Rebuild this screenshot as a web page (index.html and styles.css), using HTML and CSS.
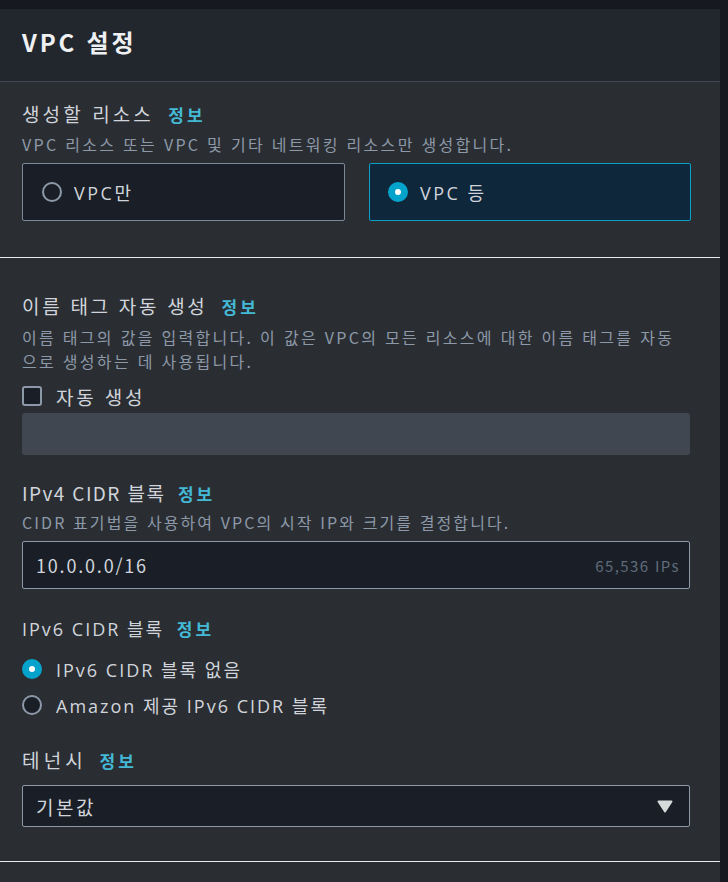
FILE: index.html
```html
<!DOCTYPE html>
<html lang="ko">
<head>
<meta charset="utf-8">
<link rel="stylesheet" href="styles.css">
</head>
<body>
<div class="panel">
  <div class="header"><h2 class="title">VPC 설정</h2></div>

  <div class="section s1">
    <div class="label">생성할 리소스 <a class="info">정보</a></div>
    <div class="desc">VPC 리소스 또는 VPC 및 기타 네트워킹 리소스만 생성합니다.</div>
    <div class="tiles">
      <div class="tile">
        <span class="radio"></span><span class="tile-text">VPC만</span>
      </div>
      <div class="tile tile-on">
        <span class="radio radio-on"></span><span class="tile-text">VPC 등</span>
      </div>
    </div>
  </div>

  <div class="section s2">
    <div class="label label-long">이름 태그 자동 생성 <a class="info">정보</a></div>
    <div class="desc desc-2">이름 태그의 값을 입력합니다. 이 값은 VPC의 모든 리소스에 대한 이름 태그를 자동<br>으로 생성하는 데 사용됩니다.</div>
    <div class="check-row"><span class="checkbox"></span><span class="check-text">자동 생성</span></div>
    <div class="disabled-input"></div>

    <div class="label label-latin mt-field">IPv4 CIDR 블록 <a class="info">정보</a></div>
    <div class="desc desc-3">CIDR 표기법을 사용하여 VPC의 시작 IP와 크기를 결정합니다.</div>
    <div class="input">
      <span class="input-value">10.0.0.0/16</span>
      <span class="input-hint">65,536 IPs</span>
    </div>

    <div class="label mt-field6 wide">IPv6 CIDR 블록 <a class="info">정보</a></div>
    <div class="radio-list">
      <div class="radio-row"><span class="radio radio-on"></span><span class="radio-text">IPv6 CIDR 블록 없음</span></div>
      <div class="radio-row"><span class="radio"></span><span class="radio-text">Amazon 제공 IPv6 CIDR 블록</span></div>
    </div>

    <div class="label label-short mt-tenancy">테넌시 <a class="info">정보</a></div>
    <div class="select">
      <span class="select-value">기본값</span>
      <svg class="caret" width="16" height="13" viewBox="0 0 16 13"><path d="M1.5 1.5 H14.5 L8 11.5 Z" fill="#d5dbdb" stroke="#d5dbdb" stroke-width="2" stroke-linejoin="round"/></svg>
    </div>
  </div>
</div>
</body>
</html>
```

FILE: styles.css
```css
* { box-sizing: border-box; }
html, body { margin: 0; padding: 0; }
body {
  background: #161a20;
  font-family: "Noto Sans CJK KR", "Noto Sans", sans-serif;
  color: #d1d5db;
  height: 882px;
  overflow: hidden;
}
.panel {
  margin-top: 9px;
  width: 720px;
  height: 873px;
  background: #2a2e33;
}
.header {
  height: 73px;
  background: #22262d;
  border-bottom: 1px solid #414750;
  padding: 0 0 7px 22px;
  display: flex;
  align-items: center;
}
.title {
  margin: 0;
  font-size: 24px;
  font-weight: 700;
  color: #eef0f2;
  line-height: 30px;
  letter-spacing: 2.8px;
}
.section { padding: 0 30px 0 22px; }
.s1 { padding-top: 18px; padding-bottom: 36px; border-bottom: 1px solid #e9ebed; }
.s2 { padding-top: 34px; padding-bottom: 34px; border-bottom: 1px solid #e9ebed; }
.label {
  font-size: 19px;
  line-height: 28px;
  color: #d1d5db;
  letter-spacing: 3.1px;
}
.label-long { letter-spacing: 2.7px; }
.label-latin { letter-spacing: 1.4px; }
.label-short { letter-spacing: 4.2px; }
.info {
  margin-left: 6px;
  font-family: "Noto Sans CJK KR", sans-serif;
  font-size: 17px;
  font-weight: 700;
  color: #44b9d6;
  letter-spacing: 3px;
}
.label-short .info { margin-left: 3px; }
.desc {
  font-size: 16px;
  line-height: 24px;
  color: #8d99a8;
  margin-top: 3px;
  letter-spacing: 2.3px;
}
.desc-2 { margin-top: 4px; }
.desc-3 { margin-top: 2px; letter-spacing: 2.1px; }
.tiles {
  margin-top: 7px;
  display: grid;
  grid-template-columns: 323px 322px;
  column-gap: 24px;
}
.tile {
  height: 58px;
  border: 1px solid #7d8998;
  border-radius: 2px;
  background: #1a1f27;
  display: flex;
  align-items: center;
  padding-left: 19px;
}
.tile-on {
  border-color: #0aa0c8;
  background: #0f273b;
  padding-left: 18px;
}
.radio {
  width: 20px;
  height: 20px;
  border-radius: 50%;
  border: 2px solid #8d99a8;
  background: transparent;
  flex: none;
}
.radio-on {
  border: 7px solid #03a3cc;
  background: #ffffff;
}
.tile-text {
  margin-left: 12px;
  font-family: "Open Sans", "Noto Sans CJK KR", sans-serif;
  font-size: 18px;
  letter-spacing: 2.5px;
  color: #d1d5db;
}
.check-row {
  margin-top: 9px;
  height: 28px;
  display: flex;
  align-items: center;
}
.checkbox {
  width: 20px;
  height: 20px;
  border: 2px solid #8d99a8;
  border-radius: 3px;
  background: #1a1f27;
}
.check-text {
  margin-left: 14px;
  font-size: 19px;
  letter-spacing: 2.8px;
  color: #d1d5db;
}
.disabled-input {
  margin-top: 3px;
  height: 42px;
  border-radius: 3px;
  background: #414750;
}
.mt-field { margin-top: 24px; }
.mt-field6 { margin-top: 26px; }
.mt-tenancy { margin-top: 27px; }
.input {
  margin-top: 7px;
  height: 48px;
  border: 1px solid #8d99a8;
  border-radius: 2px;
  background: #1a1f27;
  display: flex;
  align-items: center;
  justify-content: space-between;
  padding: 0 9px 0 13px;
}
.input-value {
  font-size: 18px;
  letter-spacing: 1.8px;
  color: #d1d5db;
}
.input-hint {
  font-size: 15px;
  letter-spacing: 1.4px;
  color: #5f6b7a;
}
.wide {
  font-family: "Open Sans", "Noto Sans CJK KR", sans-serif;
  font-size: 18px;
  letter-spacing: 2px;
}
.radio-list {
  margin-top: 12px;
  display: flex;
  flex-direction: column;
  gap: 8px;
}
.radio-row {
  height: 28px;
  display: flex;
  align-items: center;
}
.radio-row .radio { background: #1a1f27; }
.radio-row .radio-on { background: #ffffff; }
.radio-text {
  margin-left: 14px;
  font-family: "Open Sans", "Noto Sans CJK KR", sans-serif;
  font-size: 18px;
  letter-spacing: 2px;
  color: #d1d5db;
}
.select {
  margin-top: 10px;
  height: 42px;
  border: 1px solid #8d99a8;
  border-radius: 2px;
  background: #1a1f27;
  display: flex;
  align-items: center;
  justify-content: space-between;
  padding: 0 16px 0 13px;
}
.select-value {
  font-size: 19px;
  letter-spacing: 2.5px;
  color: #d1d5db;
}
.caret { display: block; }
```
